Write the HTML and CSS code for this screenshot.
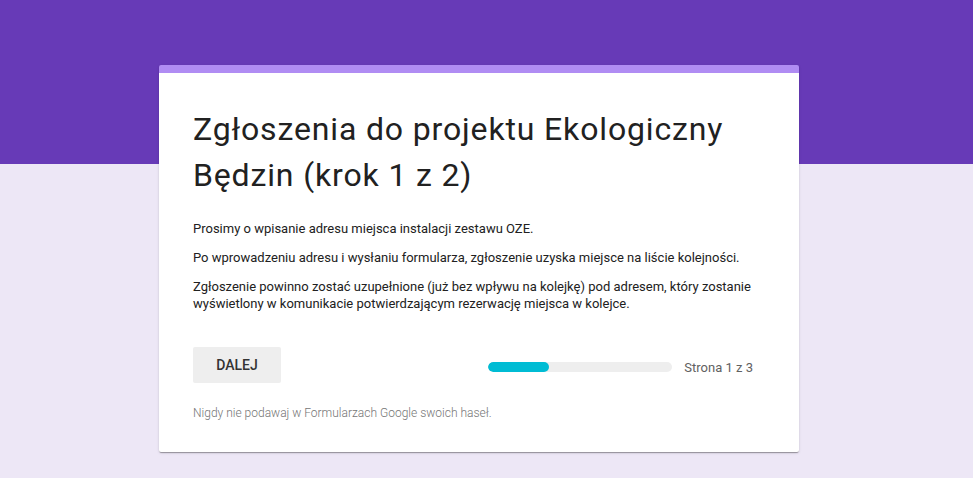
FILE: index.html
```html
<!DOCTYPE html>
<html>
<head>
    <title>Zgłoszenia do projektu Ekologiczny Będzin (krok 1 z 2)</title>
    <link rel="stylesheet" href="styles.css">
</head>
<body>
    <div class="form-card">
        <h1 class="form-title">Zgłoszenia do projektu Ekologiczny Będzin (krok 1 z 2)</h1>
        <div class="form-description">
            <p>Prosimy o wpisanie adresu miejsca instalacji zestawu OZE.</p>
            <p>Po wprowadzeniu adresu i wysłaniu formularza, zgłoszenie uzyska miejsce na liście kolejności.</p>
            <p>Zgłoszenie powinno zostać uzupełnione (już bez wpływu na kolejkę) pod adresem, który zostanie wyświetlony w komunikacie potwierdzającym rezerwację miejsca w kolejce.</p>
        </div>
        <div class="form-nav">
            <button type="button" class="next-button">DALEJ</button>
            <div class="progress">
                <div class="progress-track">
                    <div class="progress-fill" style="width: 33%;"></div>
                </div>
                <span class="progress-label">Strona 1 z 3</span>
            </div>
        </div>
        <p class="form-footer">Nigdy nie podawaj w Formularzach Google swoich haseł.</p>
    </div>
</body>
</html>
```

FILE: styles.css
```css
body {
    margin: 0;
    padding-right: 15px; /* room the scrollbar took in the original */
    font-family: Roboto, "Liberation Sans", Arial, sans-serif;
    background: linear-gradient(#673ab7 0, #673ab7 164px, #ede7f6 164px);
    min-height: 478px;
}

.form-card {
    width: 572px;
    margin: 65px auto 0;
    padding: 33px 34px 31px;
    background: #fff;
    border-top: 8px solid #b08cf3;
    border-radius: 2px;
    box-shadow: 0 2px 1px -1px rgba(0, 0, 0, 0.2), 0 1px 1px 0 rgba(0, 0, 0, 0.14), 0 1px 3px 0 rgba(0, 0, 0, 0.12);
}

.form-title {
    margin: 0;
    font-size: 32px;
    font-weight: 400;
    line-height: 46px;
    letter-spacing: 0.85px;
    color: #212121;
}

.form-description {
    margin-top: 22px;
    font-size: 13px;
    line-height: 17px;
    color: #212121;
}

.form-description p {
    margin: 0 0 12px;
}

.form-description p:last-child {
    margin-bottom: 0;
}

/* Navigation row: button + page progress */
.form-nav {
    display: flex;
    align-items: center;
    justify-content: space-between;
    margin-top: 35px;
}

.next-button {
    width: 88px;
    height: 36px;
    border: none;
    border-radius: 2px;
    background: #eeeeee;
    font-family: inherit;
    font-size: 14px;
    font-weight: 500;
    color: #333333;
    cursor: pointer;
}

.progress {
    display: flex;
    align-items: center;
    gap: 12px;
    margin-right: 12px;
    margin-top: 4px;
}

.progress-track {
    width: 184px;
    height: 10px;
    border-radius: 5px;
    background: #eeeeee;
    overflow: hidden;
}

.progress-fill {
    height: 100%;
    border-radius: 5px;
    background: #00bcd4;
}

.progress-label {
    font-size: 13px;
    color: #616161;
}

.form-footer {
    margin: 22px 0 0;
    font-size: 12px;
    line-height: 16px;
    font-weight: 300;
    color: #757575;
}
```
